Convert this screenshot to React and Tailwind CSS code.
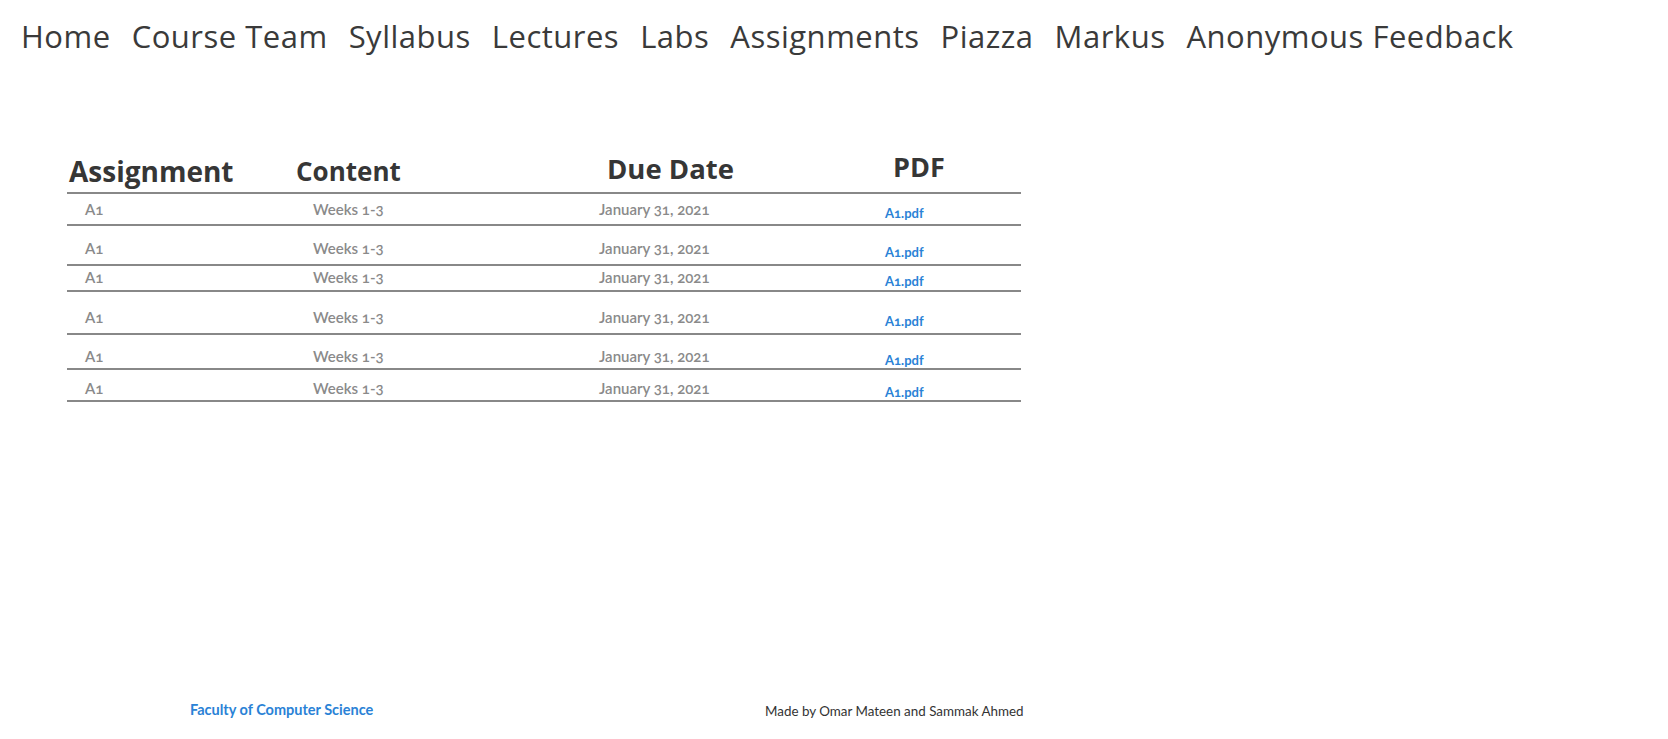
import React from 'react';

const navItems = ['Home', 'Course Team', 'Syllabus', 'Lectures', 'Labs', 'Assignments', 'Piazza', 'Markus', 'Anonymous Feedback'];

// per-row spacing copied from the page (rows are not all the same height)
const rows = [
  { pt: 'pt-[5px]', pb: 'pb-[5px]' },
  { pt: 'pt-[12px]', pb: 'pb-[6px]' },
  { pt: 'pt-[1px]', pb: 'pb-[3px]' },
  { pt: 'pt-[15px]', pb: 'pb-[6px]' },
  { pt: 'pt-[11px]', pb: 'pb-[2px]' },
  { pt: 'pt-[8px]', pb: 'pb-[2px]' },
];

function Row({ pt, pb }) {
  return (
    <div className={`flex border-b-2 border-[#888888] text-[15px] leading-[20px] text-[#8a8a8a] font-semibold oldstyle-nums ${pt} ${pb}`}>
      <div className="w-[223px] pl-[18px]">A1</div>
      <div className="w-[300px] pl-[23px]">Weeks 1-3</div>
      <div className="w-[280px] pl-[9px]">January 31, 2021</div>
      <div className="w-[151px] pl-[15px]">
        <a href="#" className="block w-fit translate-y-[4px] text-[13px] leading-[20px] font-bold text-[#2a82d6]">A1.pdf</a>
      </div>
    </div>
  );
}

export default function App() {
  return (
    <div className="h-[739px] flex flex-col bg-white font-['Lato',sans-serif]">
      <nav className="flex gap-[21px] pl-[21px] pt-[16px] font-['Open_Sans',sans-serif]">
        {navItems.map((item) => (
          <a key={item} href="#" className="text-[31px] leading-[40px] tracking-[0.5px] text-[#3a3a3a]">
            {item}
          </a>
        ))}
      </nav>

      <div className="ml-[67px] mt-[92px] w-[954px]">
        <div className="flex items-end border-b-2 border-[#888888] text-[#363636] font-bold font-['Open_Sans',sans-serif] leading-[38px]">
          <div className="w-[223px] pl-[2px] text-[28px] pb-[2px]">Assignment</div>
          <div className="w-[300px] pl-[6px] text-[26px] pb-[2px]">Content</div>
          <div className="w-[280px] pl-[17px] text-[27.5px] pb-[4px]">Due Date</div>
          <div className="w-[151px] pl-[23px] text-[27px] pb-[6px]">PDF</div>
        </div>
        {rows.map((r, i) => (
          <Row key={i} pt={r.pt} pb={r.pb} />
        ))}
      </div>

      <footer className="mt-auto flex items-center pb-[18px]">
        <a href="#" className="w-[765px] pl-[190px] text-[14.5px] font-bold text-[#2a82d6]">
          Faculty of Computer Science
        </a>
        <p className="pt-[2px] text-[13.4px] text-[#333333]">Made by Omar Mateen and Sammak Ahmed</p>
      </footer>
    </div>
  );
}
